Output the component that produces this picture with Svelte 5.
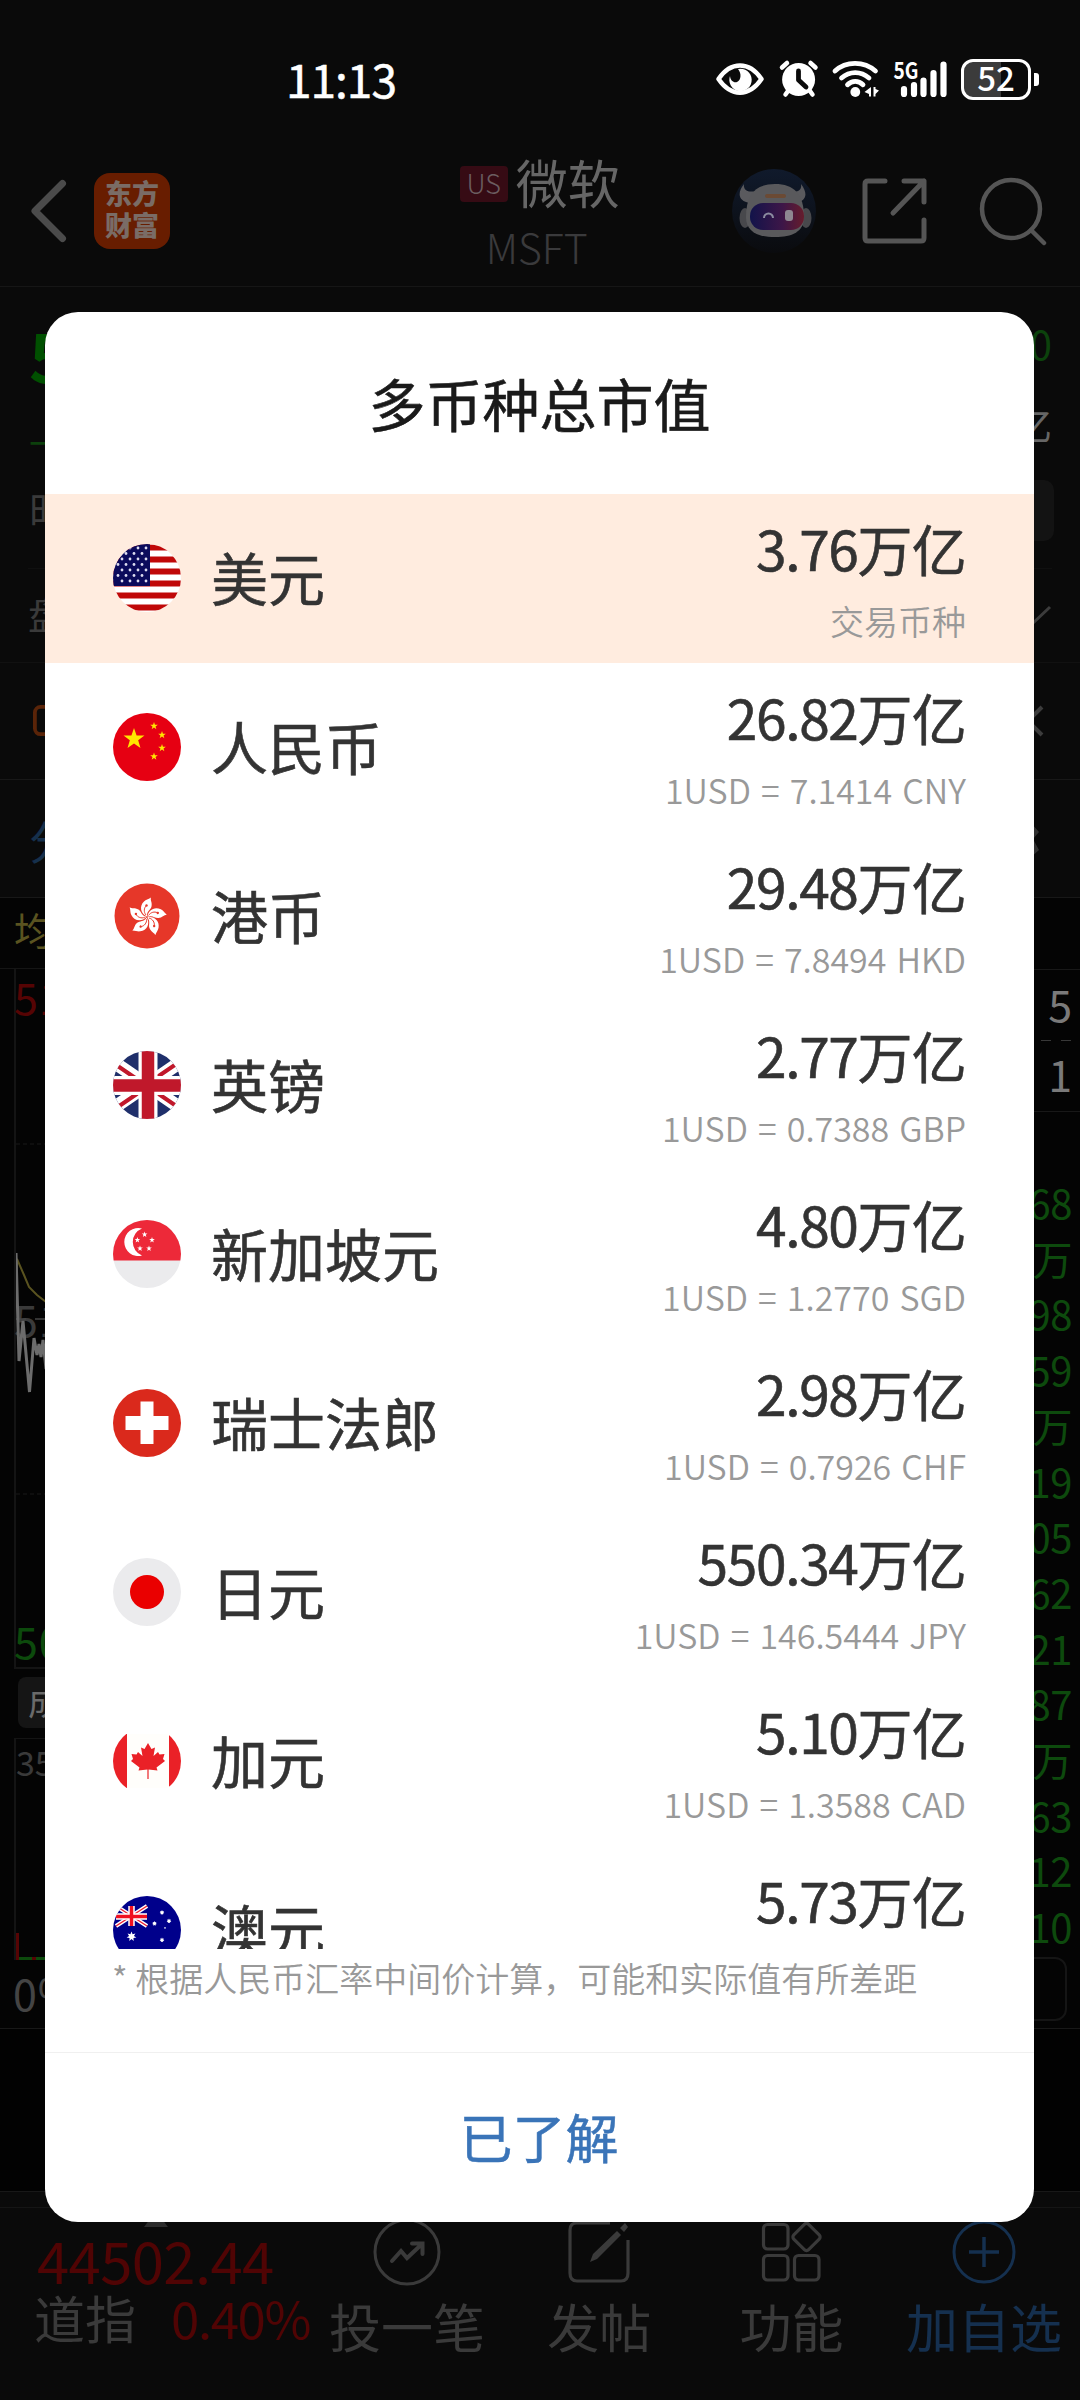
<script lang="ts">
	type Currency = { code: string; name: string; value: string; note: string };

	const currencies: Currency[] = [
		{ code: 'us', name: '美元', value: '3.76', note: '交易币种' },
		{ code: 'cn', name: '人民币', value: '26.82', note: '1USD = 7.1414 CNY' },
		{ code: 'hk', name: '港币', value: '29.48', note: '1USD = 7.8494 HKD' },
		{ code: 'gb', name: '英镑', value: '2.77', note: '1USD = 0.7388 GBP' },
		{ code: 'sg', name: '新加坡元', value: '4.80', note: '1USD = 1.2770 SGD' },
		{ code: 'ch', name: '瑞士法郎', value: '2.98', note: '1USD = 0.7926 CHF' },
		{ code: 'jp', name: '日元', value: '550.34', note: '1USD = 146.5444 JPY' },
		{ code: 'ca', name: '加元', value: '5.10', note: '1USD = 1.3588 CAD' },
		{ code: 'au', name: '澳元', value: '5.73', note: '' }
	];

	const trades = ['68', '万', '98', '59', '万', '19', '05', '62', '21', '87', '万', '63', '12', '10'];

	let selected = $state('us');

	// points of a star with n spikes
	function star(cx: number, cy: number, r: number, n = 5, inner = 0.4) {
		let pts = '';
		for (let i = 0; i < n * 2; i++) {
			const a = (Math.PI * i) / n - Math.PI / 2;
			const k = i % 2 ? r * inner : r;
			pts += `${(cx + k * Math.cos(a)).toFixed(2)},${(cy + k * Math.sin(a)).toFixed(2)} `;
		}
		return pts;
	}
</script>

{#snippet flag(code: string)}
	<svg class="flag" viewBox="0 0 68 68">
		<clipPath id="round-{code}"><circle cx="34" cy="34" r={code === 'hk' ? 32.5 : 34} /></clipPath>
		<g clip-path="url(#round-{code})">
			{#if code === 'us'}
				<rect width="68" height="68" fill="#fff" />
				{#each [0, 1, 2, 3, 4, 5] as i}
					<rect y={i * 12 + 0.5} width="68" height="6" fill="#c00808" />
				{/each}
				<rect width="37" height="42" fill="#0b0b5c" />
				{#each [0, 1, 2, 3, 4, 5, 6] as r}
					{#each [0, 1, 2, 3] as c}
						<circle cx={c * 8 + (r % 2 ? 5 : 9)} cy={r * 5.5 + 4} r="1.4" fill="#dcdcf0" />
					{/each}
				{/each}
			{:else if code === 'cn'}
				<rect width="68" height="68" fill="#e60012" />
				<g fill="#ffe600">
					<polygon points={star(21, 26, 11)} />
					<polygon points={star(41, 13, 4)} />
					<polygon points={star(49, 22, 4)} />
					<polygon points={star(49, 35, 4)} />
					<polygon points={star(41, 43.5, 4)} />
				</g>
			{:else if code === 'hk'}
				<rect width="68" height="68" fill="#e63729" />
				{#each [0, 1, 2, 3, 4] as i}
					<g transform="rotate({i * 72} 34 35)">
						<path d="M34 34.500C27.500 32 26 24 31 19.500C33 17.500 35 17.500 38 15.500C37 18 39.500 20.500 38.500 24.500C37.800 28 33.500 29 34 34.500Z" fill="#fff" />
						<path d="M33 33C30.500 30 31 26 33 24" stroke="#e63729" stroke-width="0.9" fill="none" />
						<circle cx="33.500" cy="23.500" r="1.200" fill="#e63729" />
					</g>
				{/each}
			{:else if code === 'gb'}
				<rect width="68" height="68" fill="#1f2f6b" />
				<path d="M-4 8L72 60M72 8L-4 60" stroke="#fff" stroke-width="13" />
				<path d="M-4 9L34 35M72 7L34 33M-4 62L34 36M72 61L34 35" stroke="#c0182b" stroke-width="4" />
				<path d="M35 0V68M0 34.5H68" stroke="#fff" stroke-width="19" />
				<path d="M35 0V68M0 34.5H68" stroke="#c0182b" stroke-width="12.5" />
			{:else if code === 'sg'}
				<rect width="68" height="68" fill="#ebebed" />
				<rect width="68" height="40.5" fill="#ed2939" />
				<path d="M29 8.5A14 14 0 1 0 29 35.500A14.500 14.500 0 0 1 29 8.500Z" fill="#fff" />
				<g fill="#fff">
					<polygon points={star(31.6, 14.5, 3)} />
					<polygon points={star(24.4, 20, 3)} />
					<polygon points={star(39, 20, 3)} />
					<polygon points={star(27, 28.5, 3)} />
					<polygon points={star(36, 28.5, 3)} />
				</g>
			{:else if code === 'ch'}
				<rect width="68" height="68" fill="#da291c" />
				<path d="M27.500 12.500H40.500V27H55.500V41H40.500V55H27.500V41H12.500V27H27.500Z" fill="#fff" />
			{:else if code === 'jp'}
				<rect width="68" height="68" fill="#ebebed" />
				<circle cx="34" cy="34" r="17" fill="#ea0000" />
			{:else if code === 'ca'}
				<rect y="7" width="68" height="54" fill="#fffefb" />
				<rect y="7" width="14" height="54" fill="#ea2127" />
				<rect x="56" y="7" width="12" height="54" fill="#ea2127" />
				<path
					d="M35 16L38.500 22L42 20.500L40.500 29L45 25L46.500 27.500L51.500 27L50 32L52 34L43.500 40.500L44.500 43.500L35.600 42.500V52H34.400V42.500L25.500 43.500L26.500 40.500L18 34L20 32L18.500 27L23.500 27.500L25 25L29.500 29L28 20.500L31.500 22Z"
					fill="#ea2127"
				/>
			{:else if code === 'au'}
				<rect width="68" height="68" fill="#00008b" />
				<path d="M3 10L34 30M34 10L3 30" stroke="#fff" stroke-width="4" />
				<path d="M3 10L34 30M34 10L3 30" stroke="#ee2030" stroke-width="1.4" />
				<path d="M18.500 10V30M3 20.500H34" stroke="#fff" stroke-width="6.500" />
				<path d="M18.500 10V30M3 20.500H34" stroke="#f01020" stroke-width="3.500" />
				<g fill="#fff">
					<polygon points={star(18.5, 40.5, 5, 7, 0.5)} />
					<polygon points={star(49, 16.5, 2.4, 7, 0.6)} />
					<polygon points={star(56, 25, 2.4, 7, 0.6)} />
					<polygon points={star(41.5, 27.5, 2.4, 7, 0.6)} />
					<polygon points={star(52, 32, 1.3)} />
					<polygon points={star(49, 44, 2.4, 7, 0.6)} />
				</g>
			{/if}
		</g>
	</svg>
{/snippet}

<div class="screen">
	<div class="status-bar">
		<span class="time">11:13</span>
		<svg class="status-icons" viewBox="0 0 248 44" fill="#fff">
			<!-- eye -->
			<path d="M5.500 22C13 11 21 8.500 27 8.500S41 11 48.500 22C41 33 33 35.700 27 35.700S13 33 5.500 22Z" fill="none" stroke="#fff" stroke-width="4.500" stroke-linejoin="round" />
			<path d="M25 12A11.200 11.200 0 1 1 17 19C17.500 24 21 26 24 25C28.500 23 28.500 16 25 12Z" />
			<!-- alarm -->
			<circle cx="85.600" cy="22.500" r="16.500" />
			<path d="M69 10.500L74 6M102.500 10.500L97.500 6M75 34L72.500 37.500M97 34L99.500 37.500" stroke="#fff" stroke-width="4.500" stroke-linecap="round" />
			<path d="M85.500 14V23L93 30" stroke="#0a0a0a" stroke-width="4.800" fill="none" stroke-linecap="round" stroke-linejoin="round" />
			<!-- wifi -->
			<g fill="none" stroke="#fff" stroke-width="4.800" stroke-linecap="round">
				<path d="M122 14C133 3.800 151 3.800 162.500 14" />
				<path d="M128.500 21C136.500 13.700 148 13.700 156 21" />
				<path d="M134.500 27.800C139 23.200 145.500 23.200 150 27.800" />
			</g>
			<circle cx="142.300" cy="35" r="4.900" />
			<path d="M158 30V39.500H156V37L151.500 35ZM160.500 30V39.500H162.500V37L166 33.500L162.500 32V30Z" />
			<!-- signal -->
			<path d="M191 32V37M201 28V37M210.500 23.500V37M220.500 16V37M230.500 7.500V37" stroke="#fff" stroke-width="6.200" stroke-linecap="round" />
			<text class="net" x="180.500" y="22" textLength="25" lengthAdjust="spacingAndGlyphs">5G</text>
		</svg>
		<div class="battery"><span>52</span></div>
	</div>

	<header class="nav">
		<svg class="back" viewBox="0 0 40 66"><path d="M33.500 5.500L6 33L33.500 60.500" fill="none" stroke="#4b4b4b" stroke-width="7" stroke-linecap="round" stroke-linejoin="round" /></svg>
		<div class="logo"><span>东方</span><span>财富</span></div>
		<div class="stock">
			<div class="stock-name"><span class="market">US</span>微软</div>
			<div class="ticker">MSFT</div>
		</div>
		<svg class="robot" viewBox="0 0 84 84">
			<defs>
				<linearGradient id="robot-bg" x1="0" y1="0" x2="0" y2="1"><stop offset="0" stop-color="#101a2c" /><stop offset="1" stop-color="#0a0b0e" /></linearGradient>
				<linearGradient id="visor"><stop offset="0" stop-color="#12134a" /><stop offset=".6" stop-color="#3d1648" /><stop offset="1" stop-color="#661c2c" /></linearGradient>
			</defs>
			<circle cx="42" cy="42" r="42" fill="url(#robot-bg)" />
			<path d="M12 15C5 24 6 32 18 34L24 22C16 24 11 21 12 15ZM69 15C76 24 75 32 64 34L58 22C66 24 70 21 69 15Z" fill="#5a5a5e" />
			<ellipse cx="13" cy="49" rx="5.500" ry="10" fill="#48484c" />
			<ellipse cx="74" cy="49" rx="5.500" ry="10" fill="#48484c" />
			<path d="M14 48C14 25 24 15 43 15S72 25 72 48C72 63 60 68 43 68S14 63 14 48Z" fill="#59595c" />
			<rect x="33" y="25" width="21" height="4" rx="2" fill="#6b4a34" />
			<rect x="18" y="34" width="54" height="27" rx="13" fill="url(#visor)" />
			<path d="M32 49A4.500 4.500 0 0 1 41 49" fill="none" stroke="#8b8ba0" stroke-width="2" />
			<rect x="53" y="41" width="8" height="11" rx="3" fill="#8e8791" />
		</svg>
		<svg class="share" viewBox="0 0 68 68" fill="none" stroke="#555" stroke-width="5" stroke-linecap="round" stroke-linejoin="round">
			<path d="M24 4H7Q4 4 4 7V61Q4 64 7 64H60Q63 64 63 61V43M43 4H63V25M63 4L32 36" />
		</svg>
		<svg class="search" viewBox="0 0 70 70" fill="none" stroke="#555" stroke-width="4.500" stroke-linecap="round">
			<circle cx="33" cy="33" r="29" /><path d="M53 54L66 67" />
		</svg>
	</header>

	<section class="quote">
		<div class="quote-left">
			<b class="price">5</b>
			<span class="change">−</span>
			<span class="label">时</span>
		</div>
		<div class="quote-right">
			<span class="low">0</span>
			<span class="cap">亿</span>
			<i class="chip"></i>
		</div>
	</section>
	<section class="session">
		<span>盘</span>
		<svg viewBox="0 0 36 22"><path d="M3 6L16 19L34 2" fill="none" stroke="#3c3c3c" stroke-width="3" /></svg>
	</section>
	<section class="promo">
		<svg viewBox="0 0 36 34"><rect x="2" y="2" width="32" height="29" rx="6" fill="none" stroke="#5a2408" stroke-width="4" /></svg>
		<svg viewBox="0 0 34 34"><path d="M3 3L31 31M31 3L3 31" stroke="#3c3c3c" stroke-width="4" /></svg>
	</section>
	<section class="periods">
		<span>分</span>
		<svg viewBox="0 0 36 40"><path d="M18 2L28 4L36 13L30 20L36 31L26 40H18Z" fill="#303030" /></svg>
	</section>

	<section class="market-data">
		<div class="charts">
			<div class="legend">均</div>
			<div class="chart">
				<svg viewBox="0 0 600 699" fill="none">
					<path d="M0 175H600M0 525H600" stroke="#191919" stroke-dasharray="4 3" />
					<path d="M0 350H600" stroke="#444" stroke-dasharray="10 9" stroke-width="1.500" />
					<path d="M0 333L1 290L8 306L13 318L21 326L30 333" stroke="#5a5320" stroke-width="2" />
					<path d="M0 284L3 392L7 352L13.500 423L18 369L21 386L23 375L25 388L27 371L30 400" stroke="#6c6c6c" stroke-width="3" />
				</svg>
				<span class="up">51</span>
				<span class="flat">51</span>
				<span class="down">50</span>
			</div>
			<div class="indicator"><span>成</span></div>
			<div class="volume">
				<span>35</span>
				<div class="bars">
					<i class="bar"></i>
					<i class="bars-base"></i>
				</div>
			</div>
			<div class="percent">0%</div>
		</div>
		<div class="orders">
			<div class="level">5</div>
			<div class="level second">1</div>
			<div class="trades">
				{#each trades as t}
					<span>{t}</span>
				{/each}
			</div>
			<div class="more"></div>
		</div>
	</section>
	<div class="blank"></div>

	<footer class="toolbar">
		<div class="index">
			<svg class="caret" viewBox="0 0 24 16"><path d="M12 0L24 16H0Z" fill="#2c2c2c" /></svg>
			<div class="points">44502.44</div>
			<div class="index-row"><span>道指</span><em>0.40%</em></div>
		</div>
		<div class="tab">
			<svg viewBox="0 0 68 68" fill="none" stroke="#3a3a3a" stroke-width="3">
				<circle cx="34" cy="34" r="32" />
				<path d="M19 43L28 33L34 40L49 26M39 25.500H49.500V36" stroke-width="4" stroke-linecap="round" />
			</svg>
			<span>投一笔</span>
		</div>
		<div class="tab">
			<svg viewBox="0 0 68 68" fill="none" stroke="#3a3a3a" stroke-width="3.200">
				<path d="M45 5H12Q5 5 5 12V55Q5 63 12 63H56Q63 63 63 55V22" />
				<path d="M25 44L28 36L52 13L56 17L32 41ZM55 10L60 5L63 9L59 14Z" fill="#3a3a3a" stroke="none" />
			</svg>
			<span>发帖</span>
		</div>
		<div class="tab">
			<svg viewBox="0 0 68 68" fill="none" stroke="#3a3a3a" stroke-width="3.200">
				<rect x="5.500" y="6.500" width="24.500" height="24.500" rx="4" />
				<rect x="5.500" y="37.500" width="24.500" height="24.500" rx="4" />
				<rect x="36.500" y="37.500" width="24.500" height="24.500" rx="4" />
				<rect x="38" y="8.500" width="21" height="21" rx="3" transform="rotate(45 48.500 19)" />
			</svg>
			<span>功能</span>
		</div>
		<div class="tab add">
			<svg viewBox="0 0 68 68" fill="none" stroke="#15304f" stroke-width="3">
				<circle cx="34" cy="34" r="30" /><path d="M34 19V49M19 34H49" stroke-width="3.500" />
			</svg>
			<span>加自选</span>
		</div>
	</footer>

	<div class="mask">
		<div class="dialog" role="dialog" aria-modal="true" aria-labelledby="cap-title">
			<h2 id="cap-title">多币种总市值</h2>
			<ul>
				{#each currencies as item (item.code)}
					<li class:active={item.code === selected}>
						{@render flag(item.code)}
						<span class="name">{item.name}</span>
						<div class="amount">
							<div class="value">{item.value}<span>万亿</span></div>
							<div class="rate">{item.note}</div>
						</div>
					</li>
				{/each}
			</ul>
			<p class="hint">* 根据人民币汇率中间价计算，可能和实际值有所差距</p>
			<button class="confirm">已了解</button>
		</div>
	</div>
</div>

<style>
	:global(body) {
		background: #0a0a0a;
	}

	.screen {
		position: relative;
		width: 1080px;
		height: 2400px;
		overflow: hidden;
		background: #0a0a0a;
		color: #3a3a3a;
		font-family: 'Noto Sans CJK SC', sans-serif;
	}

	.screen * {
		box-sizing: border-box;
	}

	svg {
		display: block;
		flex: none;
	}

	.status-bar {
		display: flex;
		align-items: center;
		height: 110px;
		padding: 48px 41px 0 286px;
		color: #fff;
	}

	.time {
		width: 427px;
		margin-top: -3px;
		font-size: 46px;
		line-height: 58px;
		font-weight: 400;
		letter-spacing: -1px;
		-webkit-text-stroke: 0.5px;
	}

	.status-icons {
		width: 248px;
		height: 44px;
	}

	.net {
		font-size: 23px;
		font-weight: 700;
	}

	.battery {
		position: relative;
		flex: none;
		display: flex;
		align-items: center;
		justify-content: center;
		width: 70px;
		height: 41px;
		border: 3px solid #fff;
		border-radius: 12px;
		background: linear-gradient(90deg, #3b3b3b 58%, transparent 58%);
		font-size: 33px;
		line-height: 34px;
		font-weight: 500;
	}

	.battery span {
		margin-top: -5px;
	}

	.battery::after {
		content: '';
		position: absolute;
		right: -11px;
		top: 11px;
		width: 5px;
		height: 13px;
		border-radius: 0 3px 3px 0;
		background: #fff;
	}

	.nav {
		display: flex;
		align-items: center;
		height: 177px;
		padding: 25px 32px 0 29px;
		border-bottom: 1px solid #161616;
	}

	.back {
		width: 40px;
		height: 66px;
	}

	.logo {
		display: flex;
		flex-direction: column;
		align-items: center;
		width: 76px;
		height: 76px;
		margin-left: 25px;
		padding-top: 4px;
		border-radius: 16px;
		background: #681d00;
		color: #7a6c66;
		font-size: 27px;
		line-height: 32px;
		font-weight: 900;
	}

	.stock {
		width: 563px;
		padding: 5px 0 0 290px;
	}

	.stock-name {
		display: flex;
		align-items: center;
		gap: 8px;
		height: 66px;
		font-size: 52px;
		line-height: 66px;
		color: #666;
		white-space: nowrap;
	}

	.market {
		width: 48px;
		height: 36px;
		margin-top: 5px;
		border-radius: 4px;
		background: #360b14;
		color: #6b5d60;
		font-size: 27px;
		line-height: 33px;
		font-weight: 300;
		text-align: center;
	}

	.ticker {
		margin-left: 26px;
		font-size: 41px;
		line-height: 63px;
		font-weight: 300;
		color: #3a3a3c;
	}

	.robot {
		width: 84px;
		height: 84px;
	}

	.share {
		width: 68px;
		height: 68px;
		margin-left: 45px;
	}

	.search {
		width: 70px;
		height: 70px;
		margin-left: 49px;
	}

	.quote,
	.session,
	.promo,
	.periods {
		display: flex;
		justify-content: space-between;
	}

	.quote {
		height: 281px;
	}

	.quote-left,
	.quote-right {
		display: flex;
		flex-direction: column;
		padding-left: 29px;
	}

	.quote-right {
		align-items: flex-end;
		padding: 0 28px 0 0;
	}

	.price {
		font-size: 68px;
		line-height: 134px;
		font-style: oblique 8deg;
		color: #005000;
	}

	.change {
		font-size: 42px;
		line-height: 40px;
		color: #0c400c;
	}

	.label {
		font-size: 40px;
		line-height: 96px;
	}

	.low {
		font-size: 40px;
		line-height: 112px;
		color: #0c420c;
	}

	.cap {
		font-size: 38px;
		line-height: 50px;
		color: #666;
	}

	.chip {
		width: 200px;
		height: 61px;
		margin: 31px -2px 0 0;
		border-radius: 10px;
		background: #131313;
	}

	.session {
		align-items: center;
		height: 94px;
		margin: 0 28px;
		border-top: 1px solid #101010;
		font-size: 38px;
		line-height: 50px;
	}

	.session span {
		margin-top: -6px;
	}

	.session svg {
		width: 36px;
		height: 22px;
	}

	.promo {
		align-items: center;
		height: 118px;
		padding: 0 35px 0 33px;
		border-top: 1px solid #111;
		border-bottom: 1px solid #181818;
	}

	.promo svg {
		width: 34px;
		height: 34px;
	}

	.periods {
		align-items: center;
		height: 117px;
		padding: 0 41px 0 29px;
		font-size: 46px;
		color: #16304c;
	}

	.periods svg {
		width: 36px;
		height: 40px;
	}

	.market-data {
		display: flex;
		height: 1132px;
		border-top: 1px solid #181818;
		border-bottom: 1px solid #181818;
		background: #040404;
	}

	.charts {
		width: 700px;
	}

	.legend {
		height: 71px;
		padding-left: 14px;
		font-size: 38px;
		line-height: 62px;
		color: #5a5320;
		border-bottom: 1px solid #151515;
	}

	.chart {
		position: relative;
		display: flex;
		flex-direction: column;
		justify-content: space-between;
		height: 700px;
		margin-left: 14px;
		border-left: 2px solid #141414;
		border-bottom: 2px solid #141414;
		font-size: 43px;
		line-height: 54px;
	}

	.chart span {
		margin-left: -2px;
		letter-spacing: 1px;
	}

	.chart svg {
		position: absolute;
		left: 0;
		top: 0;
		width: 600px;
		height: 699px;
	}

	.up {
		color: #560404;
	}

	.down {
		color: #0c4a0c;
	}

	.indicator {
		height: 69px;
		padding: 8px 0 0 18px;
	}

	.indicator span {
		display: block;
		width: 160px;
		height: 51px;
		padding-left: 10px;
		border-radius: 8px;
		background: #151515;
		color: #6a6a6a;
		font-size: 34px;
		line-height: 48px;
	}

	.volume {
		display: flex;
		flex-direction: column;
		justify-content: space-between;
		height: 222px;
		margin-left: 14px;
		border: solid #141414;
		border-width: 1px 0 0 2px;
		font-size: 34px;
		line-height: 46px;
	}

	.bars {
		display: flex;
		align-items: flex-end;
	}

	.bar {
		width: 3px;
		height: 27px;
		background: #560404;
	}

	.bars-base {
		width: 600px;
		height: 3px;
		background: repeating-linear-gradient(90deg, #0c4a0c 0 13px, #560404 13px 17px);
	}

	.percent {
		padding-left: 13px;
		font-size: 43px;
		line-height: 64px;
		letter-spacing: 1px;
		color: #444;
	}

	.orders {
		flex: 1;
		padding-top: 71px;
		text-align: right;
	}

	.level {
		height: 71px;
		padding-right: 8px;
		border-top: 1px solid #181818;
		font-size: 43px;
		line-height: 66px;
		color: #7a7a7a;
	}

	.level.second {
		border-top: 1px solid #333;
		border-image: repeating-linear-gradient(90deg, #383838 0 10px, transparent 10px 20px) 1;
		line-height: 64px;
	}

	.trades {
		display: flex;
		flex-direction: column;
		padding: 63px 8px 2px 0;
		border-top: 1px solid #181818;
		font-size: 40px;
		line-height: 55.7px;
		letter-spacing: -0.5px;
		color: #0d4a0d;
	}

	.more {
		height: 64px;
		margin-right: 13px;
		border: 2px solid #151515;
		border-radius: 12px;
	}

	.blank {
		height: 162px;
		background: #020202;
	}

	.toolbar {
		display: flex;
		height: 209px;
		padding-top: 15px;
		border-top: 1px solid #181818;
	}

	.index {
		width: 311px;
		padding-left: 34px;
		border-top: 1px solid #151515;
	}

	.caret {
		width: 24px;
		height: 16px;
		margin: 3px 0 0 110px;
	}

	.points {
		margin-left: 3px;
		font-size: 58px;
		line-height: 65px;
		letter-spacing: -0.6px;
		color: #500404;
	}

	.index-row {
		display: flex;
		align-items: center;
		gap: 35px;
		height: 50px;
		font-size: 51px;
		white-space: nowrap;
	}

	.index-row em {
		font-style: normal;
		letter-spacing: -1.4px;
		color: #500404;
	}

	.tab {
		display: flex;
		flex-direction: column;
		align-items: center;
		width: 192.3px;
		padding-top: 10px;
		border-top: 1px solid #151515;
		font-size: 52px;
		line-height: 79px;
	}

	.tab svg {
		width: 68px;
		height: 68px;
	}

	.add {
		color: #15304f;
	}

	.mask {
		position: absolute;
		inset: 0;
		padding: 312px 46px 0 45px;
	}

	.dialog {
		height: 1910px;
		border-radius: 33px;
		background: #fff;
		overflow: hidden;
	}

	h2 {
		height: 182px;
		margin: 0;
		font-size: 57px;
		line-height: 180px;
		font-weight: 400;
		-webkit-text-stroke: 0.6px;
		text-align: center;
		color: #1a1a1a;
	}

	ul {
		height: 1455px;
		margin: 0;
		padding: 0;
		overflow: hidden;
		list-style: none;
	}

	li {
		display: flex;
		align-items: center;
		height: 169px;
		padding: 0 68px;
	}

	li.active {
		background: #ffecdf;
	}

	.flag {
		width: 68px;
		height: 68px;
		margin-top: -1px;
	}

	.name {
		margin-left: 30px;
		padding-bottom: 5px;
		font-size: 57px;
		line-height: 70px;
		font-weight: 400;
		-webkit-text-stroke: 0.6px;
		color: #333;
	}

	.amount {
		align-self: flex-start;
		flex: 1;
		padding-top: 16px;
		text-align: right;
	}

	.value {
		font-size: 55px;
		line-height: 74px;
		font-weight: 400;
		-webkit-text-stroke: 0.6px;
		letter-spacing: -1.3px;
		color: #333;
	}

	.value span {
		letter-spacing: -0.8px;
	}

	.rate {
		font-size: 34px;
		line-height: 74px;
		font-weight: 350;
		word-spacing: 2.5px;
		color: #999;
	}

	.hint {
		height: 103px;
		margin: 0;
		padding: 0 67px;
		font-size: 34px;
		line-height: 58px;
		font-weight: 350;
		color: #999;
		white-space: nowrap;
	}

	.confirm {
		display: block;
		width: 100%;
		height: 170px;
		padding: 0 1px 3px 0;
		border: 0;
		border-top: 1px solid #f0f0f0;
		background: none;
		font: 400 53px 'Noto Sans CJK SC', sans-serif;
		-webkit-text-stroke: 0.5px;
		color: #3a74b8;
	}
</style>
